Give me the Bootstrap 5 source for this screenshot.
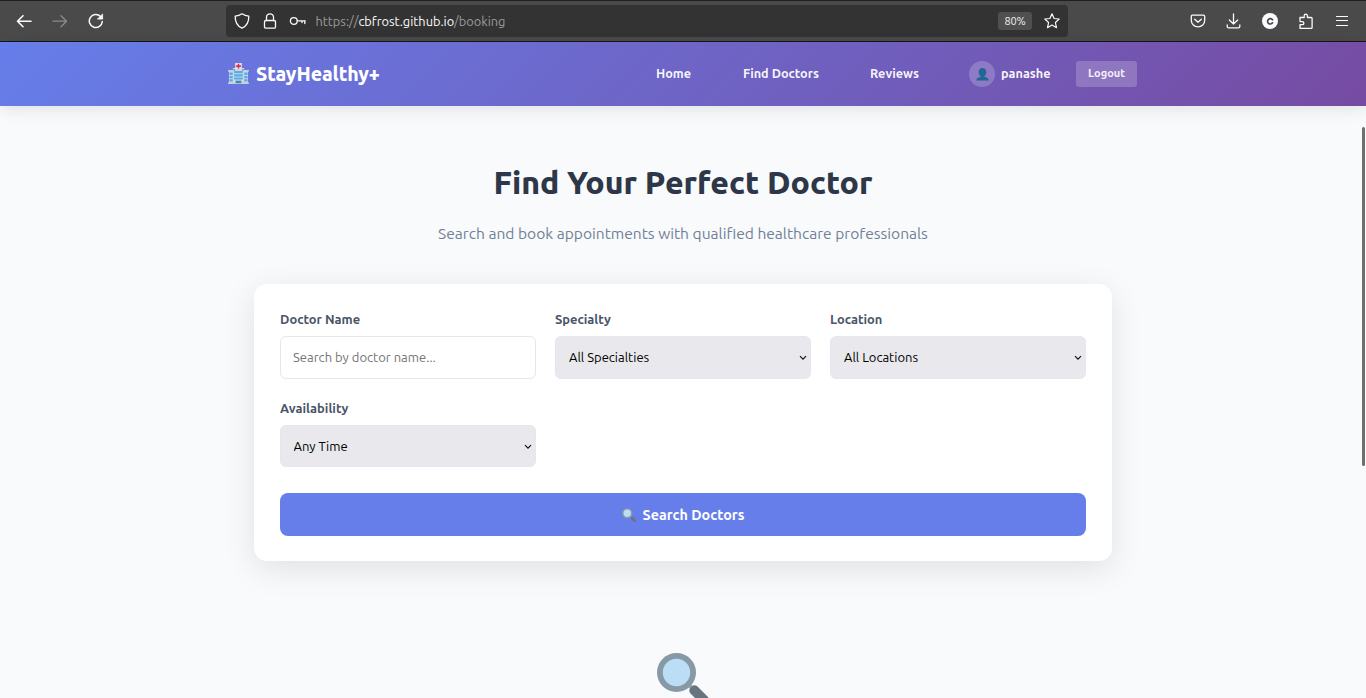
<!DOCTYPE html>
<html lang="en">
<head>
<meta charset="utf-8">
<meta name="viewport" content="width=device-width, initial-scale=1">
<title>StayHealthy+</title>
<link href="https://cdn.jsdelivr.net/npm/bootstrap@5.3.0/dist/css/bootstrap.min.css" rel="stylesheet">
<style>
body{font-family:Ubuntu,"Noto Sans",sans-serif;background:#f8fafc;height:698px;overflow:hidden;font-size:12.8px;line-height:1.5}
.browser-bar{height:42px;background:#4a4a4a;border-top:1px solid #1f1f1f;border-bottom:1px solid #161616;color:#fbfbfe;padding:0 16px}
.browser-bar svg{display:block;flex:none;fill:none;stroke:currentColor;stroke-width:1.3;stroke-linecap:round;stroke-linejoin:round}
.tool-left{width:210px;gap:20px}
.address{width:842px;height:32px;background:#333;border-radius:4px;padding:0 8px}
.address .lock{margin-left:12px}
.address .key{margin-left:11px}
.address .url{font-size:12.8px;color:#9b9b9b;margin-left:8.500px;padding-top:1px;white-space:nowrap}
.address .url b{font-weight:400;color:#fbfbfe}
.zoomlevel{width:34px;height:18px;background:#505050;border-radius:3px;font-size:11px;letter-spacing:-.2px;margin-right:12px;color:#eee}
.tool-right{gap:20px}
.site-nav{height:64px;background:linear-gradient(135deg,#667eea 0%,#764ba2 100%);box-shadow:0 3px 16px rgba(0,0,0,.1);padding:0 229px 0 228px;color:#fff;position:relative}
.site-nav .navbar-brand{font-size:19.5px;font-weight:800;color:#fff;padding:0;margin:0;line-height:28px;letter-spacing:-.1px}
.site-nav .nav-link{color:rgba(255,255,255,.94);font-weight:600;font-size:12.7px;padding:0 0 1px;line-height:19px;white-space:nowrap}
.avatar{width:26px;height:26px;background:rgba(255,255,255,.2)}
.logout{width:61px;height:26px;border-radius:3px;background:rgba(255,255,255,.2);color:#f4f0fa;font-size:11px;font-weight:600;padding:0 0 2px;border:0;line-height:24px}
h1{font-size:32px;font-weight:800;color:#2d3748;line-height:40px;margin:56px 0 19px}
.subtitle{font-size:15.57px;color:#718096;line-height:24px;margin:0 0 39px}
.search-card{width:858px;height:277px;border:0;border-radius:13px;padding:25px 26px;box-shadow:0 8px 32px rgba(0,0,0,.1)}
.search-card .row{--bs-gutter-x:19px;--bs-gutter-y:19px}
.search-card label{display:block;font-weight:700;color:#4a5568;font-size:12.9px;line-height:20px;margin:0 0 7px}
.search-card .form-control,.search-card .form-select{height:43px;border:1px solid #e2e8f0;border-radius:6px;font-size:13px;padding:0 13px;color:#000}
.search-card .form-control{padding:0 13px 2px 12px}
.search-card .form-control::placeholder{color:#757575}
.search-card .form-select{background-color:#e9e9ed;background-image:url("data:image/svg+xml,%3Csvg xmlns='http://www.w3.org/2000/svg' viewBox='0 0 8 6'%3E%3Cpath d='M1 1.2l3 3 3-3' fill='none' stroke='%23111' stroke-width='1.2'/%3E%3C/svg%3E");background-size:8px 6px;background-position:right 3px center}
.search-card #a{height:42px;padding-left:12.500px;padding-top:1px;background-position:right 3px top 18px}
.search-btn{height:43px;background:#667eea;border:0;border-radius:8px;font-size:14.3px;font-weight:600;color:#fff;padding:0;margin-top:26px}
.search-btn span{padding-top:2px}
.empty-icon{margin-top:92px}
.thumb{position:absolute;left:1362px;top:127px;width:3px;height:339px;border-radius:2px;background:#6f6f70}
</style>
</head>
<body>
<svg class="d-none" xmlns="http://www.w3.org/2000/svg">
<symbol id="lens" viewBox="0 0 52 52"><path d="M31 34l3-3 4 4-3 3z" fill="#9aaab4"/><path d="M33.500 40.500q-2.500-3 0-5.800l1.200-1.200q2.800-2.500 5.800 0L51 44q2 3-.5 6-3.500 3-6.500 1z" fill="#66757f"/><circle cx="19.500" cy="19.500" r="19.500" fill="#8899a6"/><circle cx="19.500" cy="19.500" r="13.700" fill="#bbddf5"/></symbol>
</svg>
<div class="browser-bar d-flex align-items-center">
  <div class="tool-left d-flex align-items-center">
    <svg width="16" height="16" viewBox="0 0 16 16"><path d="M15 8.200H1.500M7 2.700L1.500 8.200 7 13.700" stroke-width="1.600"/></svg>
    <svg width="16" height="16" viewBox="0 0 16 16" color="#8b8b8b"><path d="M1 8.200h13.500M9 2.700l5.500 5.500L9 13.700"/></svg>
    <svg width="16" height="16" viewBox="0 0 16 16"><path d="M14.300 8.500A6.500 6.500 0 1 1 12.500 3.500" stroke-width="1.500"/><path d="M14.600 1.300v4.800H9.800z" fill="currentColor" stroke-width=".8"/></svg>
  </div>
  <div class="address d-flex align-items-center">
    <svg width="16" height="16" viewBox="0 0 16 16"><path d="M8 .8q3 2 6.800 2.300c.2 5.500-1.900 10-6.800 12.100C3.100 13.100 1 8.600 1.200 3.100Q5 2.800 8 .8z"/></svg>
    <svg class="lock" width="16" height="16" viewBox="0 0 16 16"><rect x="2.500" y="7.500" width="11" height="7.700" rx="1.300"/><path d="M4.500 7.500V4.300a3.500 3.500 0 0 1 7 0v3.200"/></svg>
    <svg class="key" width="18" height="16" viewBox="0 0 18 16"><circle cx="4.800" cy="8" r="3.400"/><path d="M8.400 7.800H16.300M15.800 8v2.500M13 8v1.500"/></svg>
    <span class="url">https://<b>cbfrost.github.io</b>/booking</span>
    <span class="zoomlevel d-flex align-items-center justify-content-center ms-auto">80%</span>
    <svg width="16" height="16" viewBox="0 0 16 16"><path d="M8 .8l2.100 4.700 5.100.5-3.800 3.500 1.100 5.200L8 12.100l-4.500 2.600 1.100-5.200L.8 6l5.100-.5z" stroke-width="1.200"/></svg>
  </div>
  <div class="tool-right d-flex align-items-center ms-auto">
    <svg width="16" height="16" viewBox="0 0 16 16"><path d="M2.600 2.200h10.800q1.300 0 1.300 1.300v4.100a6.700 6.200 0 0 1-13.400 0V3.500q0-1.300 1.300-1.300z"/><path d="M4.700 6.200L8 9.300l3.300-3.100"/></svg>
    <svg width="16" height="16" viewBox="0 0 16 16"><path d="M7.500.8v10M3.300 7l4.200 4L11.700 7M1.200 12v1.400q0 1.400 1.400 1.400h9.800q1.400 0 1.400-1.400V12"/></svg>
    <svg width="16" height="16" viewBox="0 0 16 16"><circle cx="8" cy="8" r="8" fill="#fbfbfe" stroke="none"/><path d="M10.500 6.800A2.700 2.700 0 1 0 10.500 9.800" stroke="#4a4a4a" stroke-width="1.700"/></svg>
    <svg width="16" height="16" viewBox="0 0 16 16"><path d="M2 7.500V4.500h4.200V2.800a1.600 1.600 0 0 1 3.200 0v1.700h3.800q.9 0 .9.900v9q0 .9-.9.900H2v-3.600h2.300a1.500 1.500 0 0 0 0-3.100H2"/></svg>
    <svg width="16" height="16" viewBox="0 0 16 16"><path d="M2.500 3.500h11M2.500 7.500h11M2.500 12.500h11" stroke-width="1.200"/></svg>
  </div>
</div>
<nav class="site-nav d-flex align-items-center">
  <a class="navbar-brand d-flex align-items-center" href="#">
    <svg width="21" height="22" viewBox="0 0 22 22" preserveAspectRatio="none" style="margin-right:7px"><path d="M1 8h6V5.500h8V8h6v12H1z" fill="#ccd6dd"/><path d="M0 7h6v1.500H0zM16 7h6v1.500h-6zM5 5h12v1.500H5zM0 19.500h22V21H0z" fill="#c4d0d8"/><path d="M1.500 9.500H5V12H1.500zm0 3.500H5v2.200H1.500zm0 3.200H5v2.200H1.500zM17 9.500h3.500V12H17zm0 3.500h3.500v2.200H17zm0 3.200h3.500v2.200H17zM6.500 8h9v2.200h-9zm0 3.200h9v2.200h-9zm0 3.200h9v2.200h-9z" fill="#55acee"/><path d="M8 17.700h6v2.500H8z" fill="#3b88c3"/><path d="M7.500 0h7v6h-7z" fill="#dce4e9"/><path d="M10.200.8h1.600v1.500h1.700v1.600h-1.700v1.500h-1.600V3.900H8.500V2.300h1.700z" fill="#dd2e44"/></svg>
    <span>StayHealthy+</span>
  </a>
  <div class="d-flex align-items-center ms-auto">
    <a class="nav-link" href="#" style="width:87px">Home</a>
    <a class="nav-link" href="#" style="width:127px">Find Doctors</a>
    <a class="nav-link" href="#" style="width:99px">Reviews</a>
    <span class="avatar rounded-circle d-flex align-items-center justify-content-center"><svg width="13" height="13" viewBox="0 0 13 13"><path d="M6.500 0C9 0 10.300 1.700 10.300 4S9.300 7.400 8.400 8.100v1q3.800.3 4.400 3.400H.2Q.8 9.400 4.600 9.100v-1C3.700 7.400 2.700 6.300 2.700 4S4 0 6.500 0z" fill="#226699"/></svg></span>
    <span class="nav-link" style="width:75px;margin-left:6px">panashe</span>
    <button class="btn logout">Logout</button>
  </div>
</nav>
<main class="d-flex flex-column align-items-center">
  <h1>Find Your Perfect Doctor</h1>
  <p class="subtitle">Search and book appointments with qualified healthcare professionals</p>
  <form class="card search-card">
    <div class="row">
      <div class="col-4"><label for="n">Doctor Name</label><input id="n" class="form-control" placeholder="Search by doctor name..."></div>
      <div class="col-4"><label for="s">Specialty</label><select id="s" class="form-select"><option>All Specialties</option></select></div>
      <div class="col-4"><label for="l">Location</label><select id="l" class="form-select"><option>All Locations</option></select></div>
      <div class="col-4"><label for="a">Availability</label><select id="a" class="form-select"><option>Any Time</option></select></div>
    </div>
    <button type="button" class="btn search-btn d-flex align-items-center justify-content-center"><svg width="14" height="14" style="margin-right:7px"><use href="#lens"/></svg><span>Search Doctors</span></button>
  </form>
  <svg class="empty-icon flex-shrink-0" width="52" height="52"><use href="#lens"/></svg>
</main>
<div class="thumb"></div>
<script src="https://cdn.jsdelivr.net/npm/bootstrap@5.3.0/dist/js/bootstrap.bundle.min.js"></script>
</body>
</html>
